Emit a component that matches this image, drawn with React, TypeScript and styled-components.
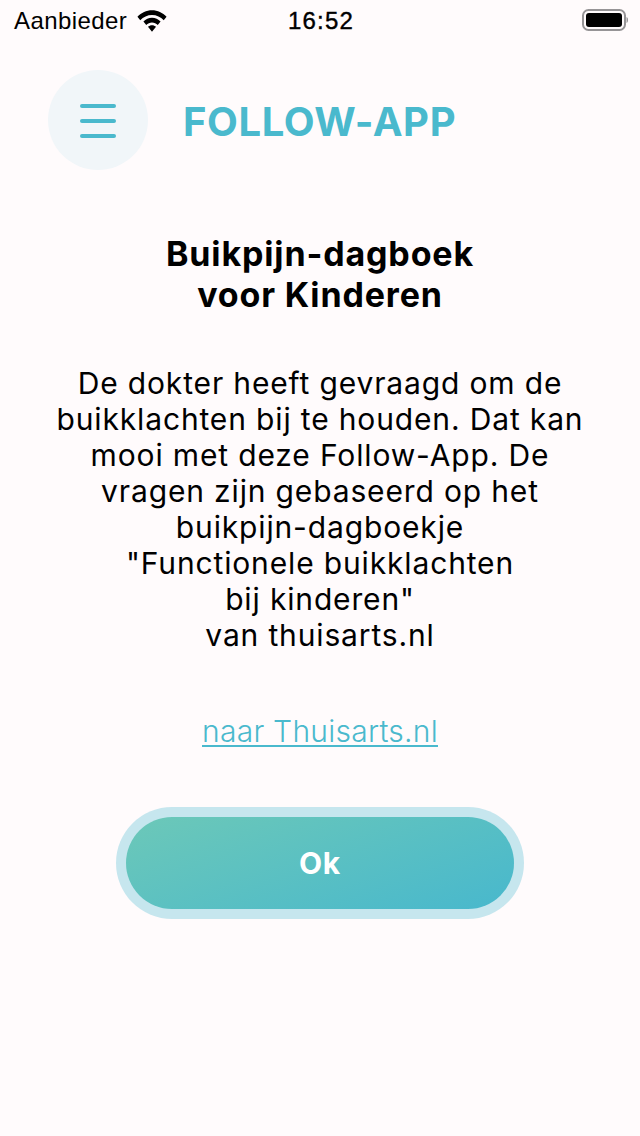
import React from "react";
import styled, { createGlobalStyle } from "styled-components";

const Global = createGlobalStyle`
  html, body { margin: 0; padding: 0; background: #fffbfc; }
  #root { width: 640px; height: 1136px; overflow: hidden; }
`;

const Page = styled.div`
  width: 640px;
  height: 1136px;
  display: flex;
  flex-direction: column;
  background: #fffbfc;
  font-family: Inter, "Liberation Sans", sans-serif;
  color: #000;
`;

const StatusBar = styled.div`
  box-sizing: border-box;
  height: 40px;
  padding: 2px 12px 0 14px;
  display: grid;
  grid-template-columns: 1fr auto 1fr;
  align-items: center;
  font-family: "Liberation Sans", Arial, sans-serif;
`;

const Carrier = styled.div`
  display: flex;
  align-items: center;
  gap: 10px;
  font-size: 24px;
  letter-spacing: 0.4px;
`;

const Clock = styled.div`
  font-size: 24px;
  font-weight: 400;
  letter-spacing: 1.2px;
  -webkit-text-stroke: 0.4px #000;
`;

const Battery = styled.div`
  justify-self: end;
  display: flex;
  align-items: center;
  margin-top: -2px;
`;

const Header = styled.header`
  margin-top: 30px;
  padding-left: 48px;
  display: flex;
  align-items: center;
  gap: 35px;
`;

const MenuButton = styled.div`
  box-sizing: border-box;
  width: 100px;
  height: 100px;
  padding-top: 2px;
  border-radius: 50%;
  background: #f1f6f9;
  display: flex;
  flex-direction: column;
  align-items: center;
  justify-content: center;
  gap: 11px;
`;

const MenuLine = styled.span`
  width: 36px;
  height: 4px;
  border-radius: 2px;
  background: #4ab9cd;
`;

const AppTitle = styled.div`
  padding-top: 2px;
  font-size: 40px;
  font-weight: 700;
  color: #4ab9cd;
  letter-spacing: 0.6px;
`;

const Content = styled.main`
  margin-top: 63px;
  display: flex;
  flex-direction: column;
  align-items: center;
  text-align: center;
`;

const Heading = styled.h1`
  margin: 0;
  font-size: 34px;
  line-height: 41px;
  font-weight: 700;
  letter-spacing: 0.85px;
`;

const Body = styled.p`
  margin: 50px 0 0;
  font-size: 30px;
  line-height: 36px;
  font-weight: 400;
  letter-spacing: 0.85px;
`;

const ExternalLink = styled.a`
  margin-top: 60px;
  font-size: 30px;
  line-height: 36px;
  font-weight: 300;
  letter-spacing: 0.25px;
  color: #4ab9cd;
  text-decoration: underline;
  text-underline-offset: 3px;
  text-decoration-thickness: 1.5px;
`;

const OkRing = styled.div`
  margin-top: 58px;
  box-sizing: border-box;
  width: 408px;
  height: 112px;
  padding: 10px;
  border-radius: 56px;
  background: #c6e6ee;
`;

const OkButton = styled.button`
  display: block;
  width: 100%;
  height: 100%;
  border: 0;
  border-radius: 46px;
  background: linear-gradient(160deg, #6cc8b8 0%, #48b8cd 100%);
  color: #fff;
  font-family: inherit;
  font-size: 30px;
  font-weight: 700;
  letter-spacing: 0.8px;
`;

const lines = [
  "De dokter heeft gevraagd om de",
  "buikklachten bij te houden. Dat kan",
  "mooi met deze Follow-App. De",
  "vragen zijn gebaseerd op het",
  "buikpijn-dagboekje",
  '"Functionele buikklachten',
  'bij kinderen"',
  "van thuisarts.nl",
];

export default function App() {
  return (
    <Page>
      <Global />
      <StatusBar>
        <Carrier>
          Aanbieder
          <svg width="30" height="22" viewBox="1.2 2.8 27.6 18" preserveAspectRatio="none" aria-hidden="true">
            <path d="M15 3C9.8 3 5.2 5 1.6 8.3l2.6 2.8C7 8.4 10.8 6.8 15 6.8s8 1.6 10.8 4.3l2.6-2.8C24.8 5 20.2 3 15 3z" />
            <path d="M15 9.2c-3 0-5.8 1.2-7.9 3.1l2.6 2.8c1.4-1.3 3.3-2.1 5.3-2.1s3.9.8 5.3 2.1l2.6-2.8C20.8 10.4 18 9.2 15 9.2z" />
            <path d="M15 15.2c-1.4 0-2.7.5-3.7 1.4l3.7 4 3.7-4c-1-.9-2.3-1.4-3.7-1.4z" />
          </svg>
        </Carrier>
        <Clock>16:52</Clock>
        <Battery>
          <svg width="46" height="24" viewBox="0 0 46 24" aria-hidden="true">
            <rect x="1" y="2" width="42" height="20" rx="5.5" fill="none" stroke="#969496" strokeWidth="2" />
            <rect x="4" y="5" width="36" height="14" rx="3" fill="#000" />
            <path d="M44.5 9c1.2.4 1.5 1.6 1.5 3s-.3 2.6-1.5 3z" fill="#969496" />
          </svg>
        </Battery>
      </StatusBar>
      <Header>
        <MenuButton>
          <MenuLine />
          <MenuLine />
          <MenuLine />
        </MenuButton>
        <AppTitle>FOLLOW-APP</AppTitle>
      </Header>
      <Content>
        <Heading>
          Buikpijn-dagboek
          <br />
          voor Kinderen
        </Heading>
        <Body>
          {lines.map((line) => (
            <React.Fragment key={line}>
              {line}
              <br />
            </React.Fragment>
          ))}
        </Body>
        <ExternalLink href="#">naar Thuisarts.nl</ExternalLink>
        <OkRing>
          <OkButton>Ok</OkButton>
        </OkRing>
      </Content>
    </Page>
  );
}
